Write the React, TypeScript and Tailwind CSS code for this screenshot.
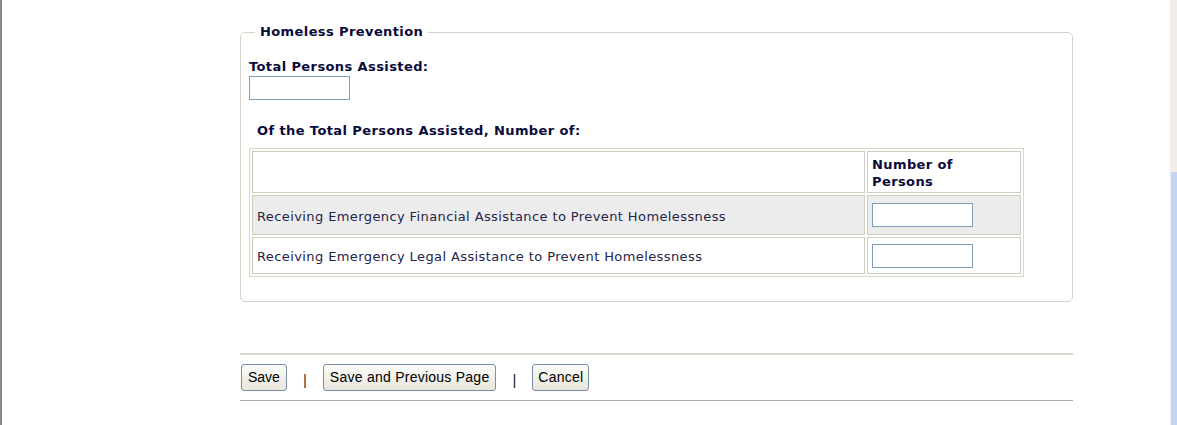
import React from "react";

const verdana = { fontFamily: '"DejaVu Sans", Verdana, sans-serif', letterSpacing: "0.4px" };

export default function App() {
  return (
    <div className="w-[1177px] h-[425px] bg-white flex overflow-hidden">
      <div className="w-[2px] bg-[#8c8a7c] shrink-0" />
      <div className="flex-1 pl-[238px] pr-[97px]">
        <div className="pt-[24px]" style={verdana}>
          <fieldset className="border border-[#d6d3c6] rounded-[5px] pl-[8px] pr-[48px] pb-[24px] m-0">
            <legend className="ml-[6px] px-[5px] text-[13px] font-bold text-[#0a0a3c] leading-[16px]">
              Homeless Prevention
            </legend>
            <div className="pt-[19px] text-[13px] font-bold text-[#0a0a3c] leading-[16px]">
              Total Persons Assisted:
            </div>
            <input
              type="text"
              className="block mt-[1px] w-[101px] h-[24px] border border-[#7f9db9] bg-white"
            />
            <div className="pt-[23px] pl-[8px] text-[13px] font-bold text-[#0a0a3c] leading-[16px]">
              Of the Total Persons Assisted, Number of:
            </div>
            <table className="mt-[9px] w-[775px] border-separate border-spacing-[2px] border border-[#d9d7cc]">
              <tbody>
                <tr>
                  <td className="border border-[#cfcdc2] h-[42px] w-[613px]"></td>
                  <td className="border border-[#cfcdc2] h-[42px] pl-[4px] pt-[4px] align-top text-[13px] font-bold text-[#0a0a3c] leading-[17px]">
                    Number of
                    <br />
                    Persons
                  </td>
                </tr>
                <tr className="bg-[#ececec]">
                  <td className="border border-[#cfcdc2] h-[40px] pl-[4px] pt-[3px] text-[13px] text-[#24244a] leading-[16px]">
                    Receiving Emergency Financial Assistance to Prevent Homelessness
                  </td>
                  <td className="border border-[#cfcdc2] h-[40px] pl-[4px]">
                    <input
                      type="text"
                      className="block w-[101px] h-[24px] border border-[#7f9db9] bg-white"
                    />
                  </td>
                </tr>
                <tr>
                  <td className="border border-[#cfcdc2] h-[37px] pl-[4px] pt-[3px] text-[13px] text-[#24244a] leading-[16px]">
                    Receiving Emergency Legal Assistance to Prevent Homelessness
                  </td>
                  <td className="border border-[#cfcdc2] h-[37px] pl-[4px]">
                    <input
                      type="text"
                      className="block w-[101px] h-[24px] border border-[#7f9db9] bg-white"
                    />
                  </td>
                </tr>
              </tbody>
            </table>
          </fieldset>
        </div>
        <div className="mt-[51px] border-t-[2px] border-[#d8d5cd] h-[1px] bg-[#efede8]" />
        <div
          className="flex items-center pt-[8px] pb-[8px] pl-[1px]"
          style={{ fontFamily: '"Liberation Sans", Arial, sans-serif' }}
        >
          <button className="h-[27px] px-[6px] text-[14px] text-black border border-[#7a8ea8] rounded-[3px] bg-gradient-to-b from-[#fbfbf8] to-[#e8e6dc]">
            Save
          </button>
          <span className="mx-[16px] mt-[6px] text-[15px] text-[#333]">|</span>
          <button className="h-[27px] px-[6px] text-[14px] tracking-[0.25px] text-black border border-[#7a8ea8] rounded-[3px] bg-gradient-to-b from-[#fbfbf8] to-[#e8e6dc]">
            Save and Previous Page
          </button>
          <span className="mx-[16px] mt-[6px] text-[15px] text-[#222]">|</span>
          <button className="h-[27px] px-[5px] text-[14px] tracking-[0.25px] text-black border border-[#7a8ea8] rounded-[3px] bg-gradient-to-b from-[#fbfbf8] to-[#e8e6dc]">
            Cancel
          </button>
        </div>
        <div className="border-t border-[#aca89e] h-[1px] bg-[#ecebe6]" />
      </div>
      <div className="w-[7px] shrink-0 flex flex-col">
        <div className="h-[172px] bg-[#f0eee6]" />
        <div className="flex-1 bg-[#c6d5f6] border-l border-[#e4ecfb]" />
      </div>
    </div>
  );
}
